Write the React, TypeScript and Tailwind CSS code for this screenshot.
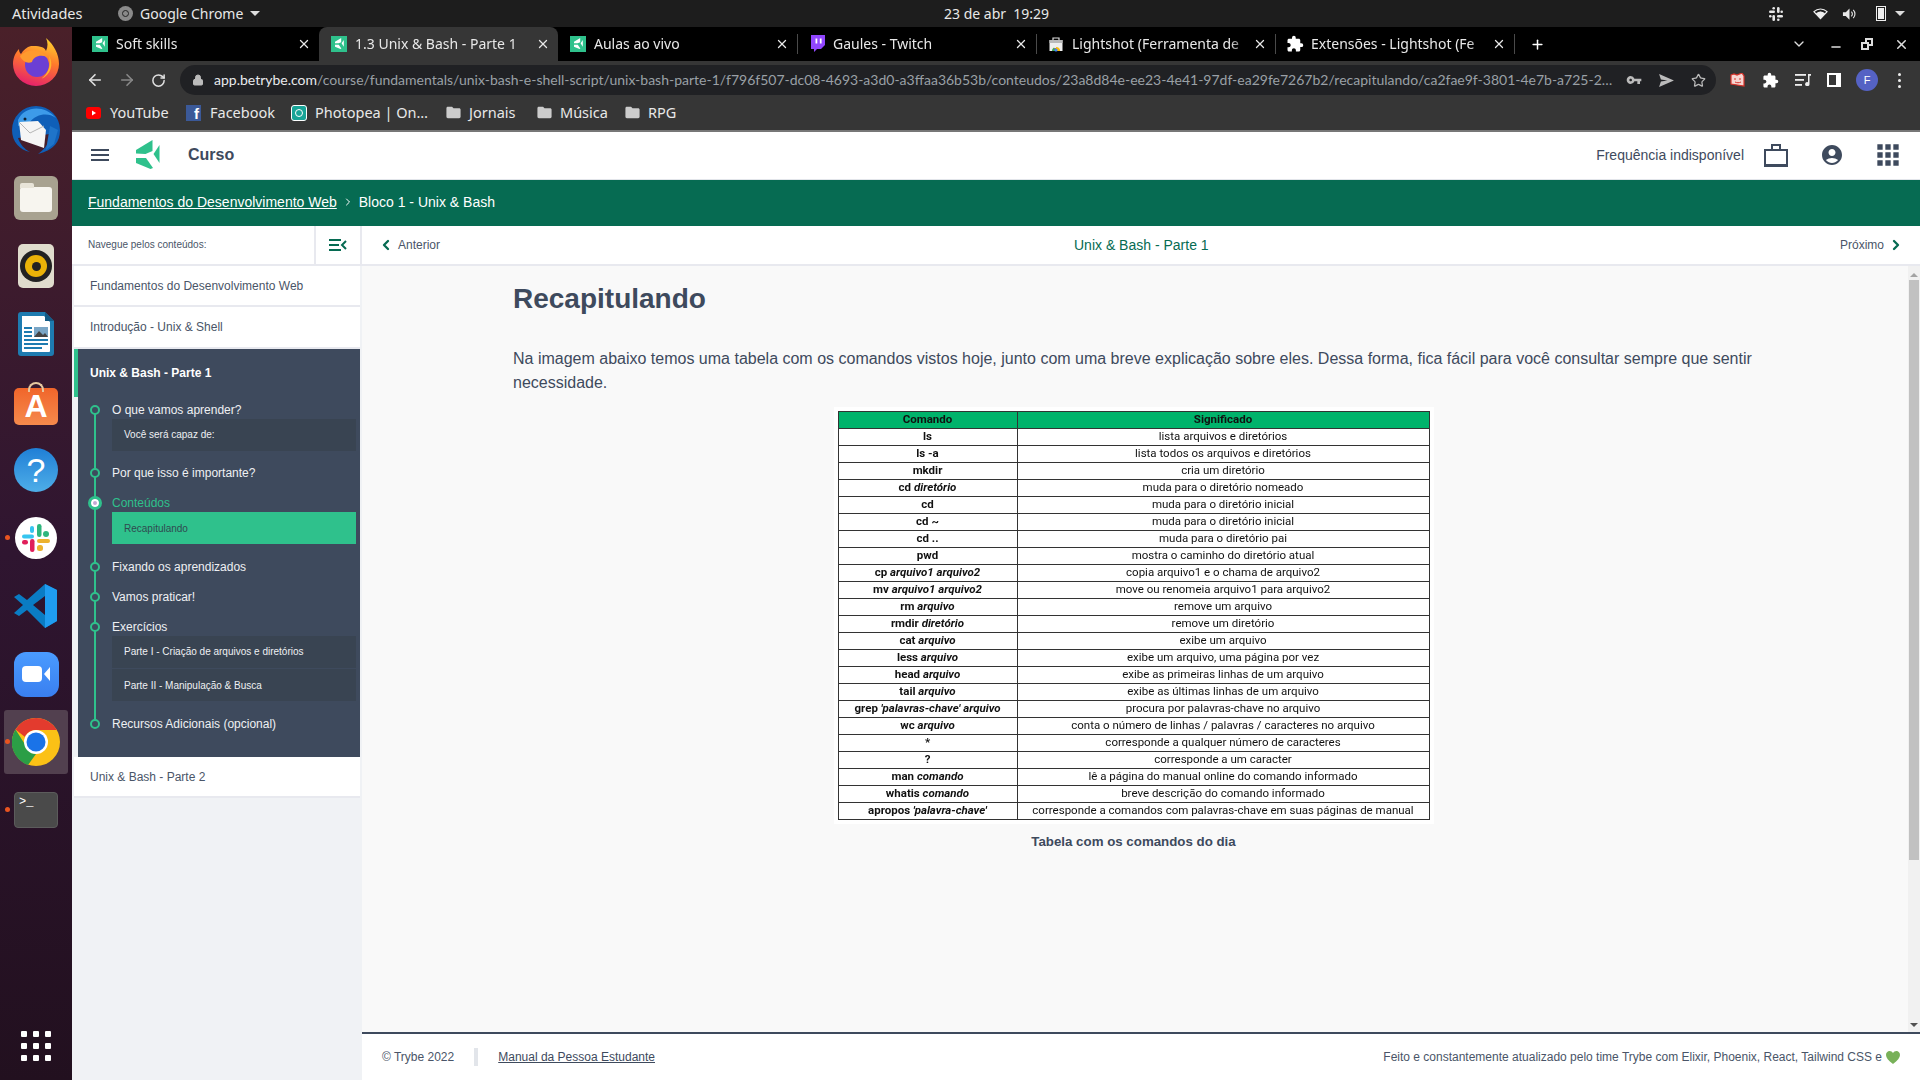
import { MdExtension, MdFolder, MdAccountCircle, MdApps, MdVpnKey } from "react-icons/md"
import {
  ArrowLeft,
  ArrowRight,
  ChevronDown,
  ChevronLeft,
  ChevronRight,
  Lock,
  Minus,
  Plus,
  RotateCw,
  Star,
  X,
} from "lucide-react"

const sans = "font-['Liberation_Sans',Arial,sans-serif]"
const ui = "font-['Noto_Sans',sans-serif]"

const tabs = [
  { title: "Soft skills", icon: "trybe" },
  { title: "1.3 Unix & Bash - Parte 1", icon: "trybe", active: true },
  { title: "Aulas ao vivo", icon: "trybe" },
  { title: "Gaules - Twitch", icon: "twitch" },
  { title: "Lightshot (Ferramenta de", icon: "store" },
  { title: "Extensões - Lightshot (Fe", icon: "puzzle" },
]

const rows: [string, string, string][] = [
  ["ls", "", "lista arquivos e diretórios"],
  ["ls -a", "", "lista todos os arquivos e diretórios"],
  ["mkdir", "", "cria um diretório"],
  ["cd ", "diretório", "muda para o diretório nomeado"],
  ["cd", "", "muda para o diretório inicial"],
  ["cd ~", "", "muda para o diretório inicial"],
  ["cd ..", "", "muda para o diretório pai"],
  ["pwd", "", "mostra o caminho do diretório atual"],
  ["cp ", "arquivo1 arquivo2", "copia arquivo1 e o chama de arquivo2"],
  ["mv ", "arquivo1 arquivo2", "move ou renomeia arquivo1 para arquivo2"],
  ["rm ", "arquivo", "remove um arquivo"],
  ["rmdir ", "diretório", "remove um diretório"],
  ["cat ", "arquivo", "exibe um arquivo"],
  ["less ", "arquivo", "exibe um arquivo, uma página por vez"],
  ["head ", "arquivo", "exibe as primeiras linhas de um arquivo"],
  ["tail ", "arquivo", "exibe as últimas linhas de um arquivo"],
  ["grep ", "'palavras-chave' arquivo", "procura por palavras-chave no arquivo"],
  ["wc ", "arquivo", "conta o número de linhas / palavras / caracteres no arquivo"],
  ["*", "", "corresponde a qualquer número de caracteres"],
  ["?", "", "corresponde a um caracter"],
  ["man ", "comando", "lê a página do manual online do comando informado"],
  ["whatis ", "comando", "breve descrição do comando informado"],
  ["apropos ", "'palavra-chave'", "corresponde a comandos com palavras-chave em suas páginas de manual"],
]

function TrybeLogo({ className, color = "#2fc18c" }: { className?: string; color?: string }) {
  return (
    <svg viewBox="0 0 24 29" className={className} fill={color}>
      <path d="M0 10 L16.5 0 V11 L9.5 14 L0 13.5 Z" />
      <path d="M0 18 H10 L17 28 L14.5 29 L0 23 Z" />
      <path d="M23.5 5 V23 L17.5 14 Z" />
    </svg>
  )
}

function Favicon({ icon }: { icon: string }) {
  if (icon === "twitch")
    return (
      <svg viewBox="0 0 16 18" className="w-4 h-[18px] shrink-0">
        <path d="M2 0 H16 V10 L12 14 H8 L5 17 V14 H2 Z" fill="#9146ff" />
        <rect x="6.5" y="3.5" width="1.8" height="5" fill="#fff" />
        <rect x="10.8" y="3.5" width="1.8" height="5" fill="#fff" />
      </svg>
    )
  if (icon === "puzzle") return <MdExtension className="w-[18px] h-[18px] text-white shrink-0" />
  if (icon === "store")
    return (
      <svg viewBox="0 0 16 16" className="w-4 h-4 shrink-0">
        <path d="M5 4 V2 H11 V4" fill="none" stroke="#ddd" strokeWidth="1.2" />
        <rect x="1.5" y="4" width="13" height="11" fill="#eee" />
        <rect x="1.5" y="4" width="13" height="3" fill="#b9b9b9" />
        <path d="M4 15 A4.2 4.2 0 0 1 12 15 Z" fill="#ea4335" />
        <path d="M8 15 V11 A4 4 0 0 1 12 15 Z" fill="#fbbc05" />
        <path d="M4 15 A4 4 0 0 1 6 11.5 L8 15 Z" fill="#34a853" />
        <circle cx="8" cy="14" r="1.6" fill="#4285f4" />
      </svg>
    )
  return (
    <div className="w-4 h-4 bg-[#2fc18c] flex items-center justify-center shrink-0">
      <TrybeLogo className="w-[9px] h-[11px]" color="#fff" />
    </div>
  )
}

function TopBar() {
  return (
    <div className={`h-[27px] bg-[#1d1d1d] text-[#e8e8e8] text-[14px] flex items-center relative shrink-0 ${ui}`}>
      <span className="ml-3 text-[14.5px]">Atividades</span>
      <div className="absolute left-[118px] top-0 h-[27px] flex items-center gap-[7px]">
        <div className="w-[15px] h-[15px] rounded-full bg-[#8a8a8a] flex items-center justify-center">
          <div className="w-[7px] h-[7px] rounded-full border border-[#222]" />
        </div>
        <span>Google Chrome</span>
        <div className="w-0 h-0 border-x-[5px] border-x-transparent border-t-[5px] border-t-[#ddd]" />
      </div>
      <span className="absolute left-[944px] top-[3px] whitespace-pre">23 de abr  19:29</span>
      <div className="ml-auto flex items-center mr-[15px]">
        <svg viewBox="0 0 14 14" className="w-[14px] h-[14px] mr-[30px]" fill="#e8e8e8">
          <rect x="8" y="0" width="2.6" height="6" rx="1.3" />
          <rect x="3.4" y="8" width="2.6" height="6" rx="1.3" />
          <rect x="0" y="3.4" width="6" height="2.6" rx="1.3" />
          <rect x="8" y="8" width="6" height="2.6" rx="1.3" />
          <rect x="3.4" y="0" width="2.6" height="2.6" rx="1.3" />
          <rect x="0" y="8" width="2.6" height="2.6" rx="1.3" />
          <rect x="11.4" y="3.4" width="2.6" height="2.6" rx="1.3" />
          <rect x="8" y="11.4" width="2.6" height="2.6" rx="1.3" />
        </svg>
        <svg viewBox="0 0 16 12" className="w-[15px] h-[12px] mr-[14px]" fill="none" stroke="#eee" strokeWidth="1.2">
          <path d="M1 3.5 A10 10 0 0 1 15 3.5 L8 11 Z" />
          <path d="M4 5.5 A6 6 0 0 1 12 5.5 L8 10 Z" fill="#eee" />
        </svg>
        <svg viewBox="0 0 16 14" className="w-[15px] h-[14px] mr-[19px]" fill="#e8e8e8">
          <path d="M1 5 H4 L8 1 V13 L4 9 H1 Z" />
          <path d="M10 4.5 A3.5 3.5 0 0 1 10 9.5 M12 2.5 A6.5 6.5 0 0 1 12 11.5" fill="none" stroke="#e8e8e8" strokeWidth="1.2" />
        </svg>
        <div className="w-[10px] h-[15px] border border-[#eee] p-px mr-[9px]">
          <div className="w-full h-full bg-[#eee]" />
        </div>
        <div className="w-0 h-0 border-x-[5px] border-x-transparent border-t-[5px] border-t-[#ddd]" />
      </div>
    </div>
  )
}

function DockItem({ children, dot, active }: { children: React.ReactNode; dot?: boolean; active?: boolean }) {
  return (
    <div className="relative w-[72px] h-[68px] flex items-center justify-center shrink-0">
      {active && <div className="absolute left-[4px] top-[2px] w-[64px] h-[64px] rounded-[3px] bg-[#52404f]" />}
      {dot && <div className="absolute left-[5px] top-[31px] w-[5px] h-[5px] rounded-full bg-[#e95420]" />}
      <div className="relative flex items-center justify-center">{children}</div>
    </div>
  )
}

function Dock() {
  return (
    <div className="w-[72px] shrink-0 bg-gradient-to-b from-[#4a2029] via-[#2f1530] to-[#22101f] flex flex-col items-center pt-px">
      <DockItem>
        <svg viewBox="0 0 46 48" className="w-[46px] h-[48px]">
          <defs>
            <linearGradient id="ffBody" x1="0.7" y1="0" x2="0.4" y2="1">
              <stop offset="0" stopColor="#ffd22e" />
              <stop offset="0.45" stopColor="#ff7a2b" />
              <stop offset="1" stopColor="#e5216b" />
            </linearGradient>
          </defs>
          <path d="M33 0 C41 7 46 16 46 26 A23 22 0 0 1 0 26 C0 19 3 14 6 11 C6 14 7 15 8 16 C10 12 14 9 18 8 C25 8 31 8 33 13 C35 9 35 4 33 0 Z" fill="url(#ffBody)" />
          <circle cx="24" cy="27" r="12" fill="#6b3fd4" />
          <path d="M7 18 C15 10 27 11 34 19 C27 16 20 19 19 24 C14 26 9 23 7 18 Z" fill="#ff9a2e" />
          <path d="M36 18 C41 26 38 37 28 41 C36 35 38 27 36 18 Z" fill="#ffb52e" />
        </svg>
      </DockItem>
      <DockItem>
        <svg viewBox="0 0 48 48" className="w-[48px] h-[48px]">
          <path d="M0 24 A24 24 0 0 1 48 24 C48 36 42 44 26 48 C34 42 38 36 38 28 L6 32 C8 38 12 43 18 46 C8 44 0 36 0 24 Z" fill="#0f5fb8" />
          <path d="M6 14 C12 0 32 -2 44 12 C36 6 24 8 18 16 L6 20 Z" fill="#3d9be9" />
          <path d="M7 16 L26 15 L34 24 L32 42 L9 34 Z" fill="#f5f5f5" />
          <path d="M7 16 L18 27 L32 20" fill="none" stroke="#b5b5b5" strokeWidth="1" />
          <circle cx="13" cy="13" r="1.5" fill="#123" />
          <path d="M38 20 L46 24 L42 38 L34 44 Z" fill="#1f74c9" />
        </svg>
      </DockItem>
      <DockItem>
        <div className="w-[44px] h-[44px] rounded-[6px] bg-[#a8a290] flex items-center justify-center">
          <div className="w-[32px] h-[25px] mt-[3px] rounded-[3px] bg-[#f7f5ef] relative">
            <div className="absolute -top-[4px] left-0 w-[14px] h-[5px] rounded-t-[2px] bg-[#e8e4d8]" />
          </div>
        </div>
      </DockItem>
      <DockItem>
        <div className="w-[36px] h-[44px] rounded-[5px] bg-[#e0dccd] flex items-center justify-center">
          <div className="w-[32px] h-[32px] rounded-full bg-[#222] flex items-center justify-center">
            <div className="w-[22px] h-[22px] rounded-full bg-[#eab308] flex items-center justify-center">
              <div className="w-[9px] h-[9px] rounded-full bg-[#222]" />
            </div>
          </div>
        </div>
      </DockItem>
      <DockItem>
        <svg viewBox="0 0 36 44" className="w-[36px] h-[44px]">
          <path d="M3 0 H27 L36 9 V41 A3 3 0 0 1 33 44 H3 A3 3 0 0 1 0 41 V3 A3 3 0 0 1 3 0 Z" fill="#1e7bb0" />
          <path d="M4 4 H26 L32 10 V39 A1 1 0 0 1 31 40 H5 A1 1 0 0 1 4 39 Z" fill="#fff" />
          <path d="M27 0 L36 9 H27 Z" fill="#135a85" />
          <rect x="6" y="15" width="8" height="2" fill="#1e7bb0" />
          <rect x="6" y="19" width="8" height="2" fill="#1e7bb0" />
          <rect x="6" y="23" width="8" height="2" fill="#1e7bb0" />
          <rect x="16" y="15" width="14" height="10" fill="#7aa6c6" />
          <path d="M16 25 L21 19 L25 23 L27 21 L30 25 Z" fill="#444" />
          <rect x="6" y="27" width="24" height="2" fill="#1e7bb0" />
          <rect x="6" y="31" width="24" height="2" fill="#1e7bb0" />
          <rect x="6" y="35" width="18" height="2" fill="#1e7bb0" />
        </svg>
      </DockItem>
      <DockItem>
        <div className="relative w-[44px] h-[37px] mt-[8px] rounded-[5px] bg-gradient-to-b from-[#f0652a] to-[#f58a4c] flex items-center justify-center">
          <div className="absolute -top-[6px] left-[14px] w-[16px] h-[10px] rounded-t-full border-2 border-[#e7c9a0] border-b-0" />
          <span className={`text-white text-[32px] font-bold leading-none ${sans}`}>A</span>
        </div>
      </DockItem>
      <DockItem>
        <div className="w-[44px] h-[44px] rounded-full bg-gradient-to-b from-[#1f7fd6] to-[#4eaee8] flex items-center justify-center">
          <span className={`text-white text-[34px] leading-none ${sans}`}>?</span>
        </div>
      </DockItem>
      <DockItem dot>
        <div className="w-[42px] h-[42px] rounded-full bg-white flex items-center justify-center">
          <svg viewBox="0 0 28 28" className="w-[28px] h-[28px]">
            <rect x="0" y="10.5" width="12" height="4" rx="2" fill="#36c5f0" />
            <rect x="8" y="2" width="4" height="7" rx="2" fill="#36c5f0" />
            <rect x="15" y="0" width="4.5" height="13" rx="2.2" fill="#2eb67d" />
            <circle cx="24" cy="10" r="3" fill="#2eb67d" />
            <rect x="15" y="15" width="13" height="4" rx="2" fill="#ecb22e" />
            <rect x="15" y="21" width="6" height="6" rx="2.5" fill="#ecb22e" />
            <rect x="8" y="15" width="4.5" height="13" rx="2.2" fill="#e01e5a" />
            <rect x="0" y="16" width="6" height="4.5" rx="2.2" fill="#e01e5a" />
          </svg>
        </div>
      </DockItem>
      <DockItem>
        <svg viewBox="0 0 44 44" className="w-[44px] h-[44px]">
          <path d="M31 0 L43 6 V37 L31 44 L13 26 L5 32 L0 29 L9 21 L0 13 L5 10 L13 16 Z M31 12 L19 21 L31 31 Z" fill="#0a7cc4" />
          <path d="M31 0 L43 6 V37 L31 44 Z" fill="#1f9cf0" />
        </svg>
      </DockItem>
      <DockItem>
        <div className="w-[45px] h-[45px] rounded-[12px] bg-gradient-to-b from-[#4a9bff] to-[#3a7ff0] flex items-center justify-center gap-[2px]">
          <div className="w-[20px] h-[16px] rounded-[4px] bg-white" />
          <div className="w-0 h-0 border-y-[7px] border-y-transparent border-r-[6px] border-r-white" />
        </div>
      </DockItem>
      <DockItem dot active>
        <svg viewBox="0 0 48 48" className="w-[48px] h-[48px]">
          <circle cx="24" cy="24" r="24" fill="#fbc116" />
          <path d="M24 0 A24 24 0 0 1 45 12 H24 A12 12 0 0 0 13 19 L3.5 11.5 A24 24 0 0 1 24 0 Z" fill="#e33b2e" />
          <path d="M3.5 11.5 L14 28 A12 12 0 0 0 24 36 L16 47 A24 24 0 0 1 3.5 11.5 Z" fill="#2b9e46" />
          <circle cx="24" cy="24" r="12" fill="#fff" />
          <circle cx="24" cy="24" r="9.5" fill="#1a73e8" />
        </svg>
      </DockItem>
      <DockItem dot>
        <div className="w-[44px] h-[36px] rounded-[4px] bg-[#4a4a4a] border border-[#5c5c5c] text-white text-[12px] leading-none pl-[4px] pt-[3px] font-['Liberation_Mono',monospace]">
          {">_"}
        </div>
      </DockItem>
      <div className="mt-auto mb-[19px] grid grid-cols-3 gap-[6px]">
        {Array.from({ length: 9 }).map((_, i) => (
          <div key={i} className="w-[6px] h-[6px] rounded-[1px] bg-white" />
        ))}
      </div>
    </div>
  )
}

function TabStrip() {
  return (
    <div className={`h-[34px] bg-black flex items-center pl-[8px] text-[14px] shrink-0 ${ui}`}>
      {tabs.map((t, i) => (
        <div
          key={t.title}
          className={`relative w-[239px] h-[34px] shrink-0 flex items-center pl-[12px] pr-[8px] pb-px text-[#e8e8e8] ${
            t.active ? "bg-[#363636] rounded-t-[8px]" : ""
          }`}
        >
          {i > 2 && <div className="absolute left-0 top-[7px] h-[20px] w-px bg-[#4a4a4a]" />}
          <div className="w-[16px] flex justify-center shrink-0">
            <Favicon icon={t.icon} />
          </div>
          <span className="ml-[8px] flex-1 overflow-hidden whitespace-nowrap [mask-image:linear-gradient(to_right,black_88%,transparent)]">
            {t.title}
          </span>
          <X className="w-[14px] h-[14px] ml-[2px] shrink-0" strokeWidth={2.2} />
        </div>
      ))}
      <div className="h-[20px] w-px bg-[#4a4a4a]" />
      <Plus className="w-[15px] h-[15px] ml-[15px] text-white" strokeWidth={2.4} />
      <div className="ml-auto flex items-center text-[#ddd]">
        <ChevronDown className="w-[16px] h-[16px] mr-[22px]" />
        <Minus className="w-[14px] h-[14px] mr-[18px] mt-[6px]" strokeWidth={2.4} />
        <div className="relative w-[12px] h-[12px] mr-[21px]">
          <div className="absolute right-0 top-0 w-[8px] h-[8px] border-2 border-[#ddd]" />
          <div className="absolute left-0 bottom-0 w-[8px] h-[8px] border-2 border-[#ddd] bg-black" />
        </div>
        <X className="w-[15px] h-[15px] mr-[11px]" strokeWidth={2.4} />
      </div>
    </div>
  )
}

function Toolbar() {
  return (
    <div className="h-[36px] bg-[#363636] flex items-center shrink-0 text-[#e0e0e0] pt-[2px]">
      <ArrowLeft className="w-[18px] h-[18px] ml-[14px]" strokeWidth={2.2} />
      <ArrowRight className="w-[18px] h-[18px] ml-[14px] text-[#888]" strokeWidth={2.2} />
      <RotateCw className="w-[15px] h-[15px] ml-[15px]" strokeWidth={2.4} />
      <div className="ml-[14px] w-[1536px] h-[30px] rounded-full bg-[#202124] flex items-center relative">
        <Lock className="w-[12px] h-[12px] ml-[12px] text-[#bbb] shrink-0" fill="#bbb" />
        <div className="ml-[10px] pb-[2px] text-[14px] whitespace-nowrap w-[1402px] font-['Lato',sans-serif]">
          <span className="text-[#e8eaed]">app.betrybe.com</span>
          <span className="text-[#9aa0a6]">
            /course/fundamentals/unix-bash-e-shell-script/unix-bash-parte-1/f796f507-dc08-4693-a3d0-a3ffaa36b53b/conteudos/23a8d84e-ee23-4e41-97df-ea29fe7267b2/recapitulando/ca2fae9f-3801-4e7b-a725-2…
          </span>
        </div>
        <MdVpnKey className="w-[16px] h-[16px] ml-[10px] text-[#bbb] shrink-0" />
        <svg viewBox="0 0 16 14" className="w-[15px] h-[13px] ml-[17px] shrink-0" fill="#bbb">
          <path d="M0 0 L16 7 L0 14 L2 8 L9 7 L2 6 Z" />
        </svg>
        <Star className="w-[15px] h-[15px] ml-[17px] text-[#bbb] shrink-0" strokeWidth={2} />
      </div>
      <svg viewBox="0 0 15 14" className="ml-[14px] w-[15px] h-[14px] shrink-0">
        <path d="M1 2 L4 1 L7 2 L12 0 L14 3 V13 L1 11 Z" fill="#f6d5d2" stroke="#d8322a" strokeWidth="1.2" />
        <path d="M4 6 H6 M9 6 H11 M5 9 C7 10 9 10 11 9" fill="none" stroke="#d8322a" strokeWidth="1" />
      </svg>
      <MdExtension className="w-[17px] h-[17px] ml-[17px] text-white shrink-0" />
      <svg viewBox="0 0 16 12" className="ml-[16px] w-[16px] h-[12px] shrink-0" fill="#eee">
        <rect x="0" y="0" width="11" height="1.8" />
        <rect x="0" y="5" width="9" height="1.8" />
        <rect x="0" y="10" width="7" height="1.8" />
        <path d="M13 0 H16 V1.8 H14.5 V10 A2.2 2 0 1 1 13 8.2 Z" />
      </svg>
      <div className="ml-[16px] w-[14px] h-[14px] border-2 border-r-[5px] border-white shrink-0" />
      <div className={`ml-[15px] w-[22px] h-[22px] rounded-full bg-[#5562c4] flex items-center justify-center text-white text-[11px] shrink-0 ${sans}`}>
        F
      </div>
      <div className="ml-[20px] flex flex-col gap-[3px] shrink-0">
        <div className="w-[3px] h-[3px] rounded-full bg-[#eee]" />
        <div className="w-[3px] h-[3px] rounded-full bg-[#eee]" />
        <div className="w-[3px] h-[3px] rounded-full bg-[#eee]" />
      </div>
    </div>
  )
}

function Bookmarks() {
  return (
    <div className={`h-[35px] bg-[#363636] border-b-2 border-[#777] flex items-center pl-[14px] pb-[2px] text-[14.5px] text-[#e8e8e8] shrink-0 ${ui}`}>
      <svg viewBox="0 0 15 12" className="w-[15px] h-[12px] shrink-0">
        <rect width="15" height="12" rx="3" fill="#f00" />
        <path d="M6 3.5 L10 6 L6 8.5 Z" fill="#fff" />
      </svg>
      <span className="ml-[9px] w-[60px] mr-[16px] whitespace-nowrap">YouTube</span>
      <div className={`w-[15px] h-[16px] bg-[#3b5998] text-white text-[15px] font-bold leading-none flex items-end justify-end pr-[2px] overflow-hidden shrink-0 ${sans}`}>
        f
      </div>
      <span className="ml-[9px] w-[65px] mr-[16px] whitespace-nowrap">Facebook</span>
      <div className="w-[16px] h-[16px] rounded-[3px] bg-[#18a497] border border-white flex items-center justify-center shrink-0">
        <div className="w-[8px] h-[8px] rounded-full border border-white" />
      </div>
      <span className="ml-[8px] w-[113px] mr-[17px] whitespace-nowrap">Photopea | On…</span>
      <MdFolder className="w-[17px] h-[17px] text-[#ccc] shrink-0" />
      <span className="ml-[7px] w-[50px] mr-[17px] whitespace-nowrap">Jornais</span>
      <MdFolder className="w-[17px] h-[17px] text-[#ccc] shrink-0" />
      <span className="ml-[7px] w-[47px] mr-[17px] whitespace-nowrap">Música</span>
      <MdFolder className="w-[17px] h-[17px] text-[#ccc] shrink-0" />
      <span className="ml-[7px]">RPG</span>
    </div>
  )
}

function AppHeader() {
  return (
    <div className={`h-[48px] bg-white border-b border-[#e2e5ea] flex items-center pb-[2px] shrink-0 text-[#3e4a5d] ${sans}`}>
      <div className="ml-[19px] w-[18px] flex flex-col gap-[3px]">
        <div className="h-[2px] bg-[#3e4a5d]" />
        <div className="h-[2px] bg-[#3e4a5d]" />
        <div className="h-[2px] bg-[#3e4a5d]" />
      </div>
      <TrybeLogo className="ml-[27px] w-[24px] h-[29px]" />
      <span className="ml-[28px] text-[16px] font-bold">Curso</span>
      <span className="ml-auto mt-px text-[14px]">Frequência indisponível</span>
      <div className="relative ml-[20px] w-[24px] h-[18px] mt-[6px] border-2 border-b-[3px] border-[#3e4a5d]">
        <div className="absolute -top-[7px] left-[5px] w-[10px] h-[5px] border-2 border-b-0 border-[#3e4a5d]" />
      </div>
      <MdAccountCircle className="ml-[32px] w-[24px] h-[24px] text-[#3e4a5d]" />
      <MdApps className="ml-[28px] mr-[16px] w-[32px] h-[32px] text-[#3e4a5d]" />
    </div>
  )
}

function NavItem({ label, tall }: { label: string; tall?: boolean }) {
  return (
    <div
      className={`ml-[2px] w-[286px] bg-white border-b-2 border-[#e8e9ef] flex items-center pl-[16px] text-[12px] text-[#4a5568] shrink-0 ${
        tall ? "h-[42px] pb-px" : "h-[41px]"
      }`}
    >
      {label}
    </div>
  )
}

function Step({ label, current, children }: { label: string; current?: boolean; children?: React.ReactNode }) {
  return (
    <div className="relative">
      <div
        className={`absolute rounded-full ${
          current
            ? "left-[-24px] top-[3px] w-[14px] h-[14px] border-[3px] border-[#2fc18c] bg-[#c5a9d4] ring-2 ring-inset ring-white"
            : "left-[-22px] top-[5px] w-[10px] h-[10px] border-[2.5px] border-[#2fc18c] bg-[#3e4a5d]"
        }`}
      />
      <div className={`h-[20px] flex items-center text-[12px] ${current ? "text-[#2fc18c]" : "text-[#eef0f3]"}`}>
        {label}
      </div>
      {children && <div className="-mt-px">{children}</div>}
    </div>
  )
}

function SubItem({ label, active, flat }: { label: string; active?: boolean; flat?: boolean }) {
  return (
    <div
      className={`h-[32px] flex items-center pl-[12px] text-[10px] ${flat ? "" : "pb-[2px]"} ${
        active ? "bg-[#2fc18c] text-[#2f4a50]" : "bg-[#394452] text-[#eef0f3]"
      }`}
    >
      {label}
    </div>
  )
}

function Sidebar() {
  return (
    <div className="w-[290px] bg-[#f0f2f5] flex flex-col shrink-0">
      <div className="h-[40px] bg-white border-b-2 border-[#e8e9ef] flex items-center shrink-0">
        <span className="ml-[16px] pb-[2px] text-[10px] text-[#4a5568] w-[226px]">Navegue pelos conteúdos:</span>
        <div className="w-[48px] h-full border-x-2 border-[#e8e9ef] flex items-center justify-center">
          <svg viewBox="0 0 18 12" className="w-[18px] h-[12px]" fill="none" stroke="#066b52" strokeWidth="2">
            <path d="M0 1 H12 M0 6 H10 M0 11 H12 M17 2 L13 6 L17 10" />
          </svg>
        </div>
      </div>
      <NavItem label="Fundamentos do Desenvolvimento Web" />
      <NavItem label="Introdução - Unix & Shell" tall />
      <div className="ml-[2px] w-[286px] flex relative">
        <div className="w-[4px] h-[48px] bg-[#2fc18c] shrink-0" />
        <div className="w-[282px] bg-[#3e4a5d] h-[408px] flex flex-col relative">
          <div className="h-[48px] flex items-center pl-[12px] text-[12px] font-bold text-white shrink-0">
            Unix & Bash - Parte 1
          </div>
          <div className="absolute left-[16px] top-[61px] h-[314px] w-[2px] bg-[#2fc18c]" />
          <div className="ml-[34px] mr-[4px] mt-[3px] flex flex-col">
            <Step label="O que vamos aprender?">
              <SubItem label="Você será capaz de:" />
            </Step>
            <div className="h-[12px]" />
            <Step label="Por que isso é importante?" />
            <div className="h-[10px]" />
            <Step label="Conteúdos" current>
              <SubItem label="Recapitulando" active flat />
            </Step>
            <div className="h-[13px]" />
            <Step label="Fixando os aprendizados" />
            <div className="h-[10px]" />
            <Step label="Vamos praticar!" />
            <div className="h-[10px]" />
            <Step label="Exercícios">
              <SubItem label="Parte I - Criação de arquivos e diretórios" />
              <div className="h-px" />
              <SubItem label="Parte II - Manipulação & Busca" flat />
            </Step>
            <div className="h-[13px]" />
            <Step label="Recursos Adicionais (opcional)" />
          </div>
        </div>
      </div>
      <NavItem label="Unix & Bash - Parte 2" />
    </div>
  )
}

function Main() {
  return (
    <div className="flex-1 flex flex-col min-w-0 bg-[#f9f9f9]">
      <div className="h-[40px] bg-white border-b-2 border-[#e8e9ef] flex items-center relative shrink-0">
        <ChevronLeft className="ml-[16px] w-[16px] h-[16px] text-[#066b52]" strokeWidth={3.5} />
        <span className="ml-[4px] text-[12px] text-[#4a5568]">Anterior</span>
        <span className="absolute left-[712px] text-[14px] text-[#066b52]">Unix & Bash - Parte 1</span>
        <span className="ml-auto text-[12px] text-[#4a5568]">Próximo</span>
        <ChevronRight className="ml-[4px] mr-[16px] w-[16px] h-[16px] text-[#066b52]" strokeWidth={3.5} />
      </div>
      <div className="flex-1 flex min-h-0">
        <div className="flex-1 pl-[151px] pr-[154px]">
          <h1 className="mt-[17px] text-[28px] leading-[32px] font-bold text-[#3e4a5d]">Recapitulando</h1>
          <p className="mt-[32px] text-[16px] leading-[24px] text-[#3e4a5d]">
            Na imagem abaixo temos uma tabela com os comandos vistos hoje, junto com uma breve explicação sobre eles.
            Dessa forma, fica fácil para você consultar sempre que sentir necessidade.
          </p>
          <div className="mt-[12px] mx-auto w-[600px] bg-white px-[4px] py-[4px]">
            <table className="w-[592px] table-fixed border-collapse font-['Roboto',sans-serif] text-[11.5px] text-[#111] blur-[0.3px]">
              <colgroup>
                <col className="w-[179px]" />
                <col />
              </colgroup>
              <thead>
                <tr className="h-[17px] bg-[#00b36b] font-bold">
                  <th className="border border-[#333] p-0 leading-none">Comando</th>
                  <th className="border border-[#333] p-0 leading-none">Significado</th>
                </tr>
              </thead>
              <tbody>
                {rows.map(([cmd, arg, desc]) => (
                  <tr key={cmd + arg + desc} className="h-[17px]">
                    <td className="border border-[#333] p-0 leading-none text-center font-bold whitespace-nowrap">
                      {cmd}
                      {arg && <em>{arg}</em>}
                    </td>
                    <td className="border border-[#333] p-0 leading-none text-center whitespace-nowrap">{desc}</td>
                  </tr>
                ))}
              </tbody>
            </table>
          </div>
          <div className="mt-[8px] text-center text-[13.3px] font-bold text-[#3e4a5d]">Tabela com os comandos do dia</div>
        </div>
        <div className="w-[12px] bg-[#f1f1f1] flex flex-col items-center shrink-0">
          <div className="mt-[7px] w-0 h-0 border-x-[4px] border-x-transparent border-b-[4px] border-b-[#a3a3a3]" />
          <div className="mt-[3px] w-[10px] h-[580px] bg-[#c1c1c1]" />
          <div className="mt-auto mb-[5px] w-0 h-0 border-x-[4px] border-x-transparent border-t-[4px] border-t-[#505050]" />
        </div>
      </div>
      <div className="h-[48px] bg-white border-t-2 border-[#3e4a5d] flex items-center text-[12px] text-[#4a5568] shrink-0">
        <span className="ml-[20px]">© Trybe 2022</span>
        <div className="ml-[20px] w-[4px] h-[18px] bg-[#e2e5ea]" />
        <a className="ml-[20px] underline text-[#3e4a5d]">Manual da Pessoa Estudante</a>
        <span className="ml-auto mr-[20px] flex items-center gap-[4px]">
          Feito e constantemente atualizado pelo time Trybe com Elixir, Phoenix, React, Tailwind CSS e
          <svg viewBox="0 0 24 22" className="w-[14px] h-[13px]" fill="#78b159">
            <path d="M12 22 C4 16 0 11 0 6.5 C0 3 2.7 0 6.2 0 C8.6 0 10.8 1.3 12 3.4 C13.2 1.3 15.4 0 17.8 0 C21.3 0 24 3 24 6.5 C24 11 20 16 12 22 Z" />
          </svg>
        </span>
      </div>
    </div>
  )
}

export default function App() {
  return (
    <div className="w-[1920px] h-[1080px] flex flex-col overflow-hidden bg-white">
      <TopBar />
      <div className="flex-1 flex min-h-0">
        <Dock />
        <div className="flex-1 flex flex-col min-w-0">
          <TabStrip />
          <Toolbar />
          <Bookmarks />
          <AppHeader />
          <div className={`h-[46px] bg-[#066b52] flex items-center pl-[16px] pb-[2px] text-[14px] text-white shrink-0 ${sans}`}>
            <a className="underline">Fundamentos do Desenvolvimento Web</a>
            <ChevronRight className="w-[12px] h-[12px] mx-[5px]" />
            <span>Bloco 1 - Unix & Bash</span>
          </div>
          <div className={`flex-1 flex min-h-0 ${sans}`}>
            <Sidebar />
            <Main />
          </div>
        </div>
      </div>
    </div>
  )
}
